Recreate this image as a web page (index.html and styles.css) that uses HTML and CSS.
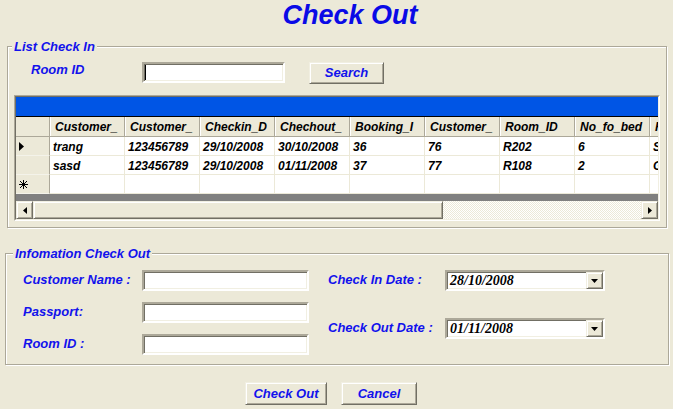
FILE: index.html
```html
<!DOCTYPE html>
<html>
<head>
<meta charset="utf-8">
<link rel="stylesheet" href="styles.css">
</head>
<body>
<h1 class="title">Check Out</h1>

<fieldset class="group group-list">
  <legend class="legend legend-list">List Check In</legend>
  <div class="search-row">
    <span class="lbl room-lbl">Room ID</span>
    <div class="sunken textbox search-box"><span class="caret"></span></div>
    <button class="raised btn search-btn">Search</button>
  </div>
  <div class="grid">
    <div class="grid-inner">
      <div class="grid-caption"></div>
      <div class="grid-rows">
        <div class="row head">
          <div class="rh"></div>
          <div class="c">Customer_</div>
          <div class="c">Customer_</div>
          <div class="c">Checkin_D</div>
          <div class="c">Chechout_</div>
          <div class="c">Booking_I</div>
          <div class="c">Customer_</div>
          <div class="c">Room_ID</div>
          <div class="c">No_fo_bed</div>
          <div class="c last">R</div>
        </div>
        <div class="row data">
          <div class="rh"><svg width="5" height="9" viewBox="0 0 5 9"><polygon points="0,0 5,4.5 0,9" fill="#000"/></svg></div>
          <div class="c">trang</div>
          <div class="c">123456789</div>
          <div class="c">29/10/2008</div>
          <div class="c">30/10/2008</div>
          <div class="c">36</div>
          <div class="c">76</div>
          <div class="c">R202</div>
          <div class="c">6</div>
          <div class="c last">S</div>
        </div>
        <div class="row data">
          <div class="rh"></div>
          <div class="c">sasd</div>
          <div class="c">123456789</div>
          <div class="c">29/10/2008</div>
          <div class="c">01/11/2008</div>
          <div class="c">37</div>
          <div class="c">77</div>
          <div class="c">R108</div>
          <div class="c">2</div>
          <div class="c last">G</div>
        </div>
        <div class="row data">
          <div class="rh"><svg width="9" height="9" viewBox="0 0 9 9"><g stroke="#000" stroke-width="1"><line x1="4.5" y1="0" x2="4.5" y2="9"/><line x1="0" y1="4.5" x2="9" y2="4.5"/><line x1="1" y1="1" x2="8" y2="8"/><line x1="8" y1="1" x2="1" y2="8"/></g></svg></div>
          <div class="c"></div>
          <div class="c"></div>
          <div class="c"></div>
          <div class="c"></div>
          <div class="c"></div>
          <div class="c"></div>
          <div class="c"></div>
          <div class="c"></div>
          <div class="c last"></div>
        </div>
      </div>
      <div class="grid-gap"></div>
      <div class="hscroll">
        <div class="raised sb-btn"><svg width="4" height="7" viewBox="0 0 4 7"><polygon points="4,0 0,3.5 4,7" fill="#000"/></svg></div>
        <div class="raised sb-thumb"></div>
        <div class="sb-track"></div>
        <div class="raised sb-btn"><svg width="4" height="7" viewBox="0 0 4 7"><polygon points="0,0 4,3.5 0,7" fill="#000"/></svg></div>
      </div>
    </div>
  </div>
</fieldset>

<fieldset class="group group-info">
  <legend class="legend legend-info">Infomation Check Out</legend>
  <div class="form">
    <div class="col col-left">
      <div class="frow"><span class="lbl flabel">Customer Name :</span><div class="sunken textbox wide"></div></div>
      <div class="frow"><span class="lbl flabel">Passport:</span><div class="sunken textbox wide"></div></div>
      <div class="frow"><span class="lbl flabel">Room ID :</span><div class="sunken textbox wide"></div></div>
    </div>
    <div class="col col-right">
      <div class="frow"><span class="lbl rlabel">Check In Date :</span>
        <div class="sunken combo"><span class="combo-text">28/10/2008</span><span class="raised drop"><svg width="7" height="4" viewBox="0 0 7 4"><polygon points="0,0 7,0 3.5,4" fill="#000"/></svg></span></div>
      </div>
      <div class="frow"><span class="lbl rlabel">Check Out Date :</span>
        <div class="sunken combo"><span class="combo-text">01/11/2008</span><span class="raised drop"><svg width="7" height="4" viewBox="0 0 7 4"><polygon points="0,0 7,0 3.5,4" fill="#000"/></svg></span></div>
      </div>
    </div>
  </div>
</fieldset>

<div class="actions">
  <button class="raised btn checkout-btn">Check Out</button>
  <button class="raised btn cancel-btn">Cancel</button>
</div>
</body>
</html>
```

FILE: styles.css
```css
* { box-sizing: border-box; }
html, body { margin: 0; padding: 0; }
body {
  background: #ece9d8;
  width: 673px;
  height: 409px;
  overflow: hidden;
  font-family: "Liberation Sans", Arial, sans-serif;
  font-weight: bold;
  font-style: italic;
  font-size: 13px;
  color: #1212ec;
}

.title {
  margin: 0;
  height: 32px;
  padding-left: 27px;
  line-height: 30px;
  font-size: 27px;
  text-align: center;
  color: #0a0ae6;
  font-style: italic;
  font-weight: bold;
}

/* group boxes */
.group {
  margin: 0;
  padding: 0;
  min-width: 0;
  border: 1px solid #aca899;
  box-shadow: inset 1px 1px #fff, 1px 1px #fff;
}
.legend {
  padding: 0 2px;
  line-height: 15px;
  font-size: 13px;
  background: #ece9d8;
}
.group-list {
  margin: 7px 6px 0 7px;
  padding: 0 6px 6px 6px;
}
.legend-list { margin-left: -2px; }
.group-info {
  margin: 18px 4px 0 5px;
  padding: 9px 0 9px 17px;
}
.legend-info { margin-left: -10px; }

/* 3D styles */
.sunken {
  background: #fff;
  border: 2px solid;
  border-color: #aca899 #fff #fff #aca899;
  box-shadow: inset 1px 1px #716f64, inset -1px -1px #f1efe2;
}
.raised {
  background: #ece9d8;
  border: 1px solid;
  border-color: #f1efe2 #716f64 #716f64 #f1efe2;
  box-shadow: inset 1px 1px #fff, inset -1px -1px #aca899;
}
.btn {
  font-family: "Liberation Sans", Arial, sans-serif;
  font-weight: bold;
  font-style: italic;
  font-size: 13px;
  color: #1212ec;
  padding: 0;
  margin: 0;
  height: 22px;
  line-height: 18px;
}

/* search row */
.search-row {
  display: flex;
  align-items: flex-start;
  height: 22px;
  margin-top: 8px;
  padding-left: 17px;
}
.lbl { display: block; white-space: nowrap; }
.room-lbl { width: 111px; line-height: 16px; }
.textbox { height: 21px; }
.search-box { width: 143px; position: relative; }
.caret {
  position: absolute;
  left: 1px;
  top: 1px;
  width: 1px;
  height: 15px;
  background: #000;
}
.search-btn { width: 75px; margin-left: 24px; }

/* grid */
.grid {
  margin-top: 11px;
  width: 646px;
  height: 126px;
  border: 1px solid;
  border-color: #aca899 #fff #fff #aca899;
}
.grid-inner {
  height: 124px;
  border: 1px solid;
  border-color: #716f64 #f1efe2 #f1efe2 #716f64;
  overflow: hidden;
  display: flex;
  flex-direction: column;
}
.grid-caption {
  height: 20px;
  flex: none;
  background: #0055e5;
  border-bottom: 1px solid #000;
}
.grid-rows { height: 77px; flex: none; overflow: hidden; }
.row { display: flex; white-space: nowrap; }
.row.head { height: 20px; }
.row.data { height: 19px; }
.rh {
  width: 34px;
  flex: none;
  background: #ece9d8;
  border-right: 1px solid #aca899;
  border-bottom: 1px solid #f4f3ea;
  display: flex;
  align-items: center;
  padding-left: 3px;
}
.head .rh { border-bottom: 1px solid #aca899; }
.c {
  width: 75px;
  flex: none;
  overflow: hidden;
  font-family: "Liberation Sans", Arial, sans-serif;
  font-size: 12px;
  color: #000;
}
.head .c {
  background: #ece9d8;
  border-right: 1px solid #aca899;
  border-bottom: 1px solid #aca899;
  box-shadow: inset 1px 0 #fff;
  padding: 1px 0 0 5px;
  line-height: 18px;
}
.data .c {
  background: #fff;
  border-right: 1px solid #ece9d8;
  border-bottom: 1px solid #ece9d8;
  padding: 2px 0 0 3px;
  line-height: 16px;
}
.c.last { width: 8px; border-right: 0; }
.grid-gap { height: 7px; flex: none; background: #808080; }
.hscroll { height: 18px; flex: none; display: flex; }
.sb-btn {
  width: 17px;
  height: 18px;
  flex: none;
  display: flex;
  align-items: center;
  justify-content: center;
}
.sb-thumb { width: 410px; height: 18px; flex: none; }
.sb-track {
  flex: 1;
  height: 18px;
  background-color: #ece9d8;
  background-image: conic-gradient(#fff 25%, #ece9d8 0 50%, #fff 0 75%, #ece9d8 0);
  background-size: 2px 2px;
}

/* info form */
.form { display: flex; }
.col { display: flex; flex-direction: column; }
.col-left { gap: 11px; }
.col-right { gap: 27px; margin-left: 19px; }
.frow { display: flex; align-items: center; height: 21px; }
.flabel { width: 119px; padding-bottom: 3px; }
.rlabel { width: 117px; padding-bottom: 3px; }
.wide { width: 167px; }
.combo {
  width: 160px;
  height: 21px;
  display: flex;
  align-items: center;
  justify-content: space-between;
}
.combo-text {
  font-family: "Liberation Serif", "Times New Roman", serif;
  font-weight: bold;
  font-style: italic;
  font-size: 14px;
  color: #000;
  padding: 1px 0 0 3px;
}
.drop {
  width: 17px;
  height: 17px;
  display: flex;
  align-items: center;
  justify-content: center;
}

/* bottom buttons */
.actions {
  display: flex;
  gap: 14px;
  margin-top: 17px;
  padding-left: 245px;
}
.checkout-btn { width: 82px; height: 23px; }
.cancel-btn { width: 76px; height: 23px; }
```
